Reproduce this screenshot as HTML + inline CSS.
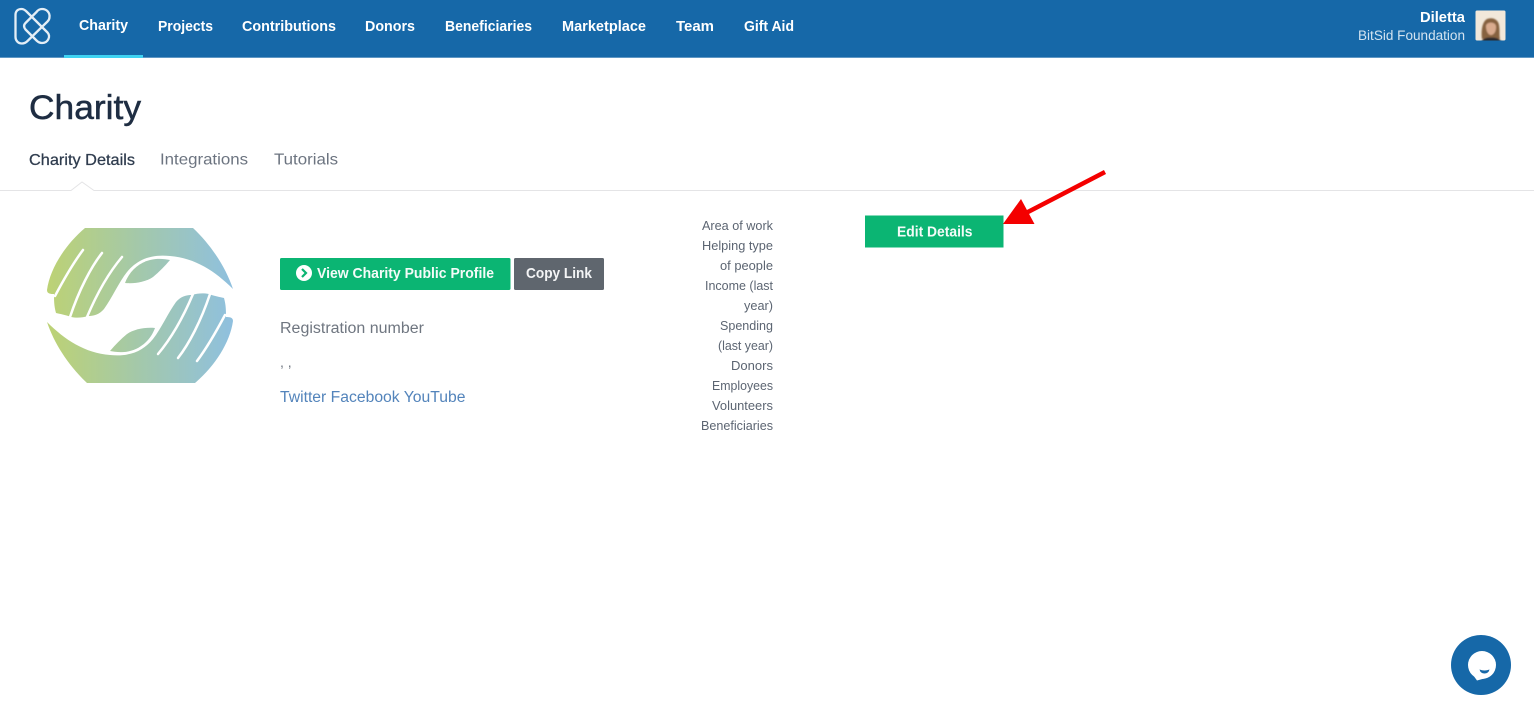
<!DOCTYPE html>
<html lang="en"><head><meta charset="utf-8"><title>Charity</title>
<style>
html,body{margin:0;padding:0;background:#fff;width:1534px;height:714px;overflow:hidden}
svg{display:block;font-family:"Liberation Sans",sans-serif}
.n{fill:#fff;font-size:15px;font-weight:700}
.l{fill:#5c6572;font-size:12.8px}
</style></head><body>
<svg width="1534" height="714" viewBox="0 0 1534 714" xmlns="http://www.w3.org/2000/svg">
<defs>
<linearGradient id="g" gradientUnits="userSpaceOnUse" x1="47" y1="0" x2="233" y2="0">
<stop offset="0" stop-color="#bdd274"/><stop offset=".5" stop-color="#a3c8ab"/><stop offset="1" stop-color="#8fc0df"/>
</linearGradient>
<linearGradient id="r" gradientUnits="userSpaceOnUse" x1="47" y1="0" x2="233" y2="0">
<stop offset="0" stop-color="#8fc0df"/><stop offset=".5" stop-color="#a3c8ab"/><stop offset="1" stop-color="#bdd274"/>
</linearGradient>
<filter id="b" x="-20%" y="-20%" width="140%" height="140%"><feGaussianBlur stdDeviation="0.9"/></filter>
<clipPath id="av"><rect x="1475.500" y="10.500" width="30" height="30" rx="1.500"/></clipPath>
<path id="body" d="M85 228H193C212 246 226 268 233 289C215 271 195 258 170 256C150 254 137 260 127 272C119 282 112 298 104 309C99 315 93 316 88 316C82 318 76 318 71 317C66 315 60 314 56 313C54 306 54 300 54 294C51 294 47 294 47 290C50 268 66 244 85 228Z"/>
<path id="slit" fill="none" stroke="#fff" stroke-width="2.500" stroke-linecap="round" d="M83 250C74 262 64 279 55 296M102 253C91 267 79 290 70 317M122 257C111 270 98 291 87 317"/>
<path id="leaf" d="M125 283C129 272 138 263 150 260C158 258 165 259 170 260C165 266 159 272 153 277C146 282 134 284 125 283Z"/>
</defs>

<!-- top bar -->
<rect x="0" y="0" width="1534" height="58" fill="#1668a8"/>
<rect x="0" y="57" width="1534" height="1" fill="#5f97c4"/>
<rect x="64" y="55" width="79" height="3" fill="#3fd3f2"/>
<path fill="none" stroke="#e4eef6" stroke-width="2.300" stroke-linejoin="round" d="M15.500 15C15.500 11 18 9 21.500 9C23.500 9 25 10 26.500 11.500L47.500 32.500C51 36.500 48 43 42 43C39.500 43 38 42 36.500 40.500L25.500 29.500C23.500 27 23.500 25 25.500 23L36.500 12C38 10 40 9 42 9C47 9 50 13 49.500 17C49.500 19 48.500 20.500 47.500 21.500L27.500 41C26 42.500 24 43.500 22 43.500C18 43.500 15.500 40.500 15.500 37Z"/>
<text class="n" x="79" y="30" textLength="49" lengthAdjust="spacingAndGlyphs">Charity</text>
<text class="n" x="158" y="31" textLength="55" lengthAdjust="spacingAndGlyphs">Projects</text>
<text class="n" x="242" y="31" textLength="94" lengthAdjust="spacingAndGlyphs">Contributions</text>
<text class="n" x="365" y="31" textLength="50" lengthAdjust="spacingAndGlyphs">Donors</text>
<text class="n" x="445" y="31" textLength="87" lengthAdjust="spacingAndGlyphs">Beneficiaries</text>
<text class="n" x="562" y="31" textLength="84" lengthAdjust="spacingAndGlyphs">Marketplace</text>
<text class="n" x="676" y="31" textLength="38" lengthAdjust="spacingAndGlyphs">Team</text>
<text class="n" x="744" y="31" textLength="50" lengthAdjust="spacingAndGlyphs">Gift Aid</text>
<text x="1420" y="22" fill="#fff" font-size="14.500" font-weight="700" textLength="45" lengthAdjust="spacingAndGlyphs">Diletta</text>
<text x="1358" y="40" fill="#d3e3f0" font-size="13.500" textLength="107" lengthAdjust="spacingAndGlyphs">BitSid Foundation</text>
<!-- avatar -->
<g clip-path="url(#av)">
<rect x="1475.500" y="10.500" width="30" height="30" fill="#f2e8da"/>
<g filter="url(#b)">
<path d="M1482 39C1481 31 1482 22 1487 19C1492 17 1498 19 1499 25C1500 31 1499 35 1500 39Z" fill="#86623f"/>
<path d="M1486 26C1486 22 1495 21 1496 26C1496.500 31 1494 35 1491 35C1488 35 1486 31 1486 26Z" fill="#d9ab8e"/>
<path d="M1481 42C1483 38 1487 37.500 1491 37.500C1495 37.500 1499 38 1502 42Z" fill="#2b2a2e"/>
</g>
</g>

<!-- heading -->
<text x="29" y="119" fill="#1e2d42" stroke="#1e2d42" stroke-width=".5" font-size="34" textLength="112" lengthAdjust="spacingAndGlyphs">Charity</text>
<text x="29" y="165" fill="#2f3c4e" stroke="#2f3c4e" stroke-width=".25" font-size="16" textLength="106" lengthAdjust="spacingAndGlyphs">Charity Details</text>
<text x="160" y="164.500" fill="#6c7480" font-size="16" textLength="88" lengthAdjust="spacingAndGlyphs">Integrations</text>
<text x="274" y="164.500" fill="#6c7480" font-size="16" textLength="64" lengthAdjust="spacingAndGlyphs">Tutorials</text>
<path d="M0 190.500H71L82 182L94 190.500H1534" fill="#fff" stroke="#e4e4e6" stroke-width="1"/>

<!-- charity logo -->
<use href="#body" fill="url(#g)"/>
<use href="#slit"/>
<use href="#leaf" fill="url(#g)"/>
<g transform="rotate(180 140 305.500)">
<use href="#body" fill="url(#r)"/>
<use href="#slit"/>
<use href="#leaf" fill="url(#r)"/>
</g>

<!-- buttons -->
<rect x="280" y="258" width="230.500" height="32" rx="1.500" fill="#0bb573"/>
<circle cx="304" cy="273" r="8" fill="#fff"/>
<path d="M302 269L306 273L302 277" fill="none" stroke="#0bb573" stroke-width="2.200"/>
<text x="317" y="278" fill="#f4fbf8" font-size="15" font-weight="700" textLength="177" lengthAdjust="spacingAndGlyphs">View Charity Public Profile</text>
<rect x="514" y="258" width="90" height="32" rx="1.500" fill="#5f666e"/>
<text x="526" y="278" fill="#f4f5f6" font-size="15" font-weight="700" textLength="66" lengthAdjust="spacingAndGlyphs">Copy Link</text>
<text x="280" y="333" fill="#6f7680" font-size="15.500" textLength="144" lengthAdjust="spacingAndGlyphs">Registration number</text>
<text x="280" y="367" fill="#6f7680" font-size="14">, ,</text>
<text x="280" y="402" fill="#5384bb" font-size="15.500" textLength="185.500" lengthAdjust="spacingAndGlyphs">Twitter Facebook YouTube</text>

<!-- labels -->
<text class="l" x="702" y="230" textLength="71" lengthAdjust="spacingAndGlyphs">Area of work</text>
<text class="l" x="702" y="250" textLength="71" lengthAdjust="spacingAndGlyphs">Helping type</text>
<text class="l" x="720" y="270" textLength="53" lengthAdjust="spacingAndGlyphs">of people</text>
<text class="l" x="705" y="290" textLength="68" lengthAdjust="spacingAndGlyphs">Income (last</text>
<text class="l" x="744" y="310" textLength="29" lengthAdjust="spacingAndGlyphs">year)</text>
<text class="l" x="720" y="330" textLength="53" lengthAdjust="spacingAndGlyphs">Spending</text>
<text class="l" x="718" y="350" textLength="55" lengthAdjust="spacingAndGlyphs">(last year)</text>
<text class="l" x="731" y="370" textLength="42" lengthAdjust="spacingAndGlyphs">Donors</text>
<text class="l" x="712" y="390" textLength="61" lengthAdjust="spacingAndGlyphs">Employees</text>
<text class="l" x="712" y="410" textLength="61" lengthAdjust="spacingAndGlyphs">Volunteers</text>
<text class="l" x="701" y="430" textLength="72" lengthAdjust="spacingAndGlyphs">Beneficiaries</text>

<!-- edit -->
<rect x="865" y="215.500" width="138.500" height="32" fill="#0bb573"/>
<text x="897" y="236.500" fill="#f4fbf8" font-size="14.500" font-weight="700" textLength="75.500" lengthAdjust="spacingAndGlyphs">Edit Details</text>

<!-- arrow -->
<path d="M1105 172L1026 213" stroke="#f40000" stroke-width="4.500" fill="none"/>
<path d="M1003 224L1021 199L1034.500 224Z" fill="#f40000"/>

<!-- chat -->
<circle cx="1481" cy="665" r="30" fill="#1668a8"/>
<circle cx="1482" cy="665" r="14" fill="#fff"/>
<path d="M1473 675L1477 680.500L1486 678Z" fill="#fff"/>
<path d="M1479.500 669.500Q1484.500 671.500 1489.500 669.500Q1488.500 673.500 1484.500 673.500Q1480.500 673.500 1479.500 669.500Z" fill="#1668a8"/>
</svg>
</body></html>
